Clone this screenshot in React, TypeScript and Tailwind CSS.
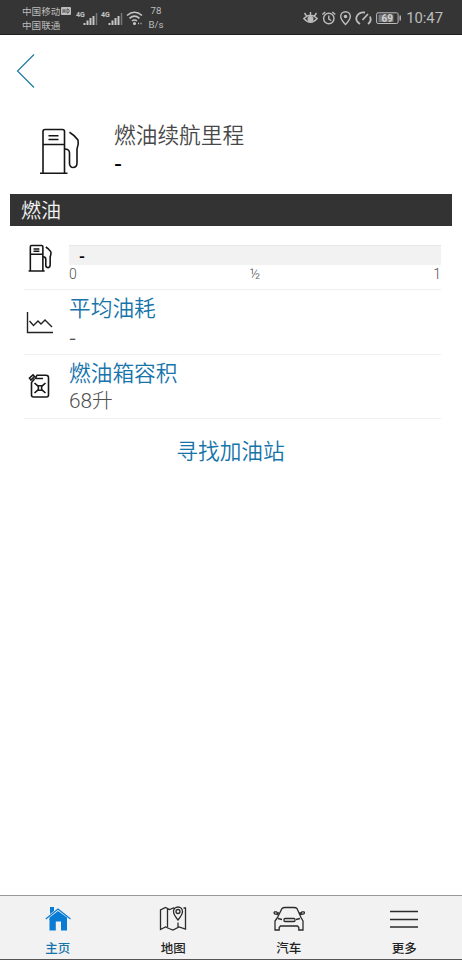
import React from 'react';

const light = "font-['Noto_Sans_CJK_SC',sans-serif] font-[350]";
const latin = "font-[Roboto,'Noto_Sans_CJK_SC',sans-serif] font-light";

function Pump({ className, sw }: { className: string; sw: number }) {
  return (
    <svg className={className} viewBox="0 0 42 48" fill="none" stroke="#151515" strokeWidth={sw}>
      <path d="M4 46V4.500Q4 2.500 6 2.500H23.500Q25.500 2.500 25.500 4.500V46M4 17.500H25.500M9.500 8.700H19.500M9.500 12.500H19.500M1 46.200H28.500" />
      <path d="M25.500 22Q30.500 22 30.500 26V37Q31 40.500 34.500 40.500Q38 40 38 36V22Q40 17 39 13Q36 8.500 30.500 5.200" />
    </svg>
  );
}

function Signal({ type }: { type: string }) {
  return (
    <svg className="h-4 w-[22px]" viewBox="0 0 22 16">
      <text x="0" y="6.500" fontSize="7" fontWeight="bold" fontFamily="Roboto, sans-serif" fill="#c6c6c6">{type}</text>
      <path d="M8.500 13v2M11.500 10.500v4.500M14.500 8v7M17.500 6v9" stroke="#c6c6c6" strokeWidth="2" />
      <path d="M20.500 3v12" stroke="#777" strokeWidth="1.500" />
    </svg>
  );
}

function StatusBar() {
  return (
    <header className="flex h-[35px] shrink-0 items-center border-b border-[#202020] bg-[#353535] pt-px text-[#bdbdbd]">
      <div className="ml-[22px] w-[54px] font-['Noto_Sans_CJK_SC',sans-serif] text-[9.6px] leading-[14px]">
        <div className="flex items-center whitespace-nowrap">中国移动
          <svg className="ml-px h-2 w-[10px] shrink-0" viewBox="0 0 10 8">
            <rect width="10" height="8" rx="1" fill="#bdbdbd" />
            <path d="M2 2v4M4 2v4M2 4h2M6 2v4h1l1-1V3L7 2Z" fill="none" stroke="#444" strokeWidth=".8" />
          </svg>
        </div>
        <div>中国联通</div>
      </div>
      <div className="flex items-center gap-[3px]">
        <Signal type="4G" />
        <Signal type="4G" />
      </div>
      <svg className="ml-[3px] h-4 w-[17px]" viewBox="0 0 17 16" fill="none" stroke="#c6c6c6" strokeWidth="1.600">
        <path d="M1 5.500Q8.500-1 16 5.500M3.500 8.300Q8.500 4 13.500 8.300M6 11Q8.500 9 11 11" />
        <circle cx="8.500" cy="13.500" r=".8" />
        <path d="M12 13.500h1M14.500 13.500h1" />
      </svg>
      <div className="ml-[4px] w-[18px] text-center font-[Roboto,sans-serif] text-[9.700px] leading-[14px]">
        <div>78</div><div>B/s</div>
      </div>
      <div className="ml-auto flex items-center">
        <svg className="h-4 w-[98px]" viewBox="0 0 98 16" fill="none" stroke="#bdbdbd" strokeWidth="1.400">
          <path d="M.8 8.500Q7.500 2 14.200 8.500Q7.500 16 .8 8.500ZM1.500 3L3.500 6M7.500 2v3M13.500 3L11.500 6" />
          <circle cx="7.500" cy="8.900" r="2.300" fill="#bdbdbd" />
          <circle cx="25.800" cy="8.500" r="5.200" />
          <path d="M19.300 4.500L22.300 2M29.300 2l3 2.500M25.800 5.500V9l2.500 1.500" />
          <path d="M42.500 14.500Q37.700 9.500 37.700 6.500A4.800 4.800 0 0 1 47.300 6.500Q47.300 9.500 42.500 14.500Z" />
          <circle cx="42.500" cy="6.500" r="1.100" fill="#bdbdbd" />
          <path d="M57 14Q52.300 11 53.500 7Q55.500 2 62 2.500M65 4L59.500 10M67 6.500Q69 11 65 14" strokeWidth="1.800" />
          <rect x="73.600" y="2.800" width="21.500" height="10.700" rx="1.500" strokeWidth="1" />
          <rect x="75.500" y="4.500" width="15" height="7.500" fill="#777" stroke="none" />
          <text x="84.200" y="12" textAnchor="middle" fontSize="10" fontWeight="bold" fontFamily="Roboto, sans-serif" fill="#d0d0d0" stroke="none">69</text>
          <path d="M97.200 5.500v5" />
        </svg>
        <span className="mr-[19px] ml-[5px] font-[Roboto,sans-serif] text-[14.800px] leading-[18px]">10:47</span>
      </div>
    </header>
  );
}

function InfoRow({ icon, title, value, valueFont }: { icon: React.ReactNode; title: string; value: string; valueFont: string }) {
  return (
    <div className="flex h-[64.500px] border-b border-[#efefef]">
      <div className="flex w-[45px] shrink-0">{icon}</div>
      <div>
        <div className={'pt-[3px] text-[21.700px] leading-[28px] text-[#1674ab] ' + light}>{title}</div>
        <div className={'text-[20.800px] leading-[30px] text-[#505050] ' + valueFont}>{value}</div>
      </div>
    </div>
  );
}

function Tab({ label, active, children }: { label: string; active?: boolean; children: React.ReactNode }) {
  return (
    <div className={"flex flex-1 flex-col items-center pt-[9px] font-['Noto_Sans_CJK_SC',sans-serif] text-[12.500px] leading-[18px] font-medium " + (active ? 'text-[#1674ab]' : 'text-[#222]')}>
      <svg className="mb-[6px] h-[28px] w-[34px]" viewBox="0 0 34 28" fill="none" stroke="#2b2b2b" strokeWidth="1.300">{children}</svg>
      {label}
    </div>
  );
}

export default function App() {
  return (
    <div className="flex h-[960px] w-[462px] flex-col overflow-hidden bg-white">
      <StatusBar />
      <main className="flex-1">
        <svg className="mt-[18px] ml-[16px] h-[36px] w-[20px]" viewBox="0 0 20 36" fill="none" stroke="#20799d" strokeWidth="1.200">
          <path d="M18 1.500L1.500 18L18 34.500" />
        </svg>
        <div className="flex h-[105px] pt-[31px] pl-[39px]">
          <Pump className="mt-[7px] h-[48px] w-[42px]" sw={1.6} />
          <div className={'ml-[33px] text-[21.700px] ' + light}>
            <div className="leading-[28px] text-[#484848]">燃油续航里程</div>
            <div className="mt-[5px] font-['Liberation_Sans',sans-serif] text-[24px] leading-[20px] font-normal text-black">-</div>
          </div>
        </div>
        <div className={'mx-[10px] flex h-[32px] w-[442px] items-center bg-[#333] pl-[11px] text-[20px] text-[#f4f4f4] ' + light}>燃油</div>
        <div className="mr-[21px] ml-[24px]">
          <div className="flex h-[64px] border-b border-[#efefef] pt-[18px]">
            <div className="w-[45px] shrink-0"><Pump className="ml-[3.500px] h-[28px] w-[24.500px]" sw={2.7} /></div>
            <div className="flex-1">
              <div className="mt-px flex h-[20px] items-center border-t border-[#e7e7e7] bg-[#f2f2f2] pb-[2px] pl-[10px] font-['Noto_Sans_CJK_SC',sans-serif] text-[16px] font-bold text-black">-</div>
              <div className={'flex justify-between text-[14px] leading-[18px] text-[#555] ' + latin}>
                <span>0</span><span>½</span><span>1</span>
              </div>
            </div>
          </div>
          <InfoRow title="平均油耗" value="-" valueFont={light} icon={
            <svg className="mt-[21px] ml-[2px] h-[23px] w-[28px]" viewBox="0 0 28 23" fill="none" stroke="#222" strokeWidth="1.400">
              <path d="M1.500 1v20.500H27M3.500 10l4 4.500L12 10l3 3 4-4 7 7" />
            </svg>
          } />
          <InfoRow title="燃油箱容积" value="68升" valueFont={latin} icon={
            <svg className="mt-[18px] ml-[4px] h-[26px] w-[22px]" viewBox="0 0 22 26" fill="none" stroke="#181818" strokeWidth="1.600">
              <path d="M7 6L9 2.200H18Q20.500 2.200 20.500 4.500V22Q20.500 24 18.500 24H5.500Q3.500 24 3.500 22V9.500L6.500 6M1.500 5L5 1.800L6.500 3.500L3 7ZM8 5.500H15" />
              <path d="M6.500 10l3 2.700h5l3-2.700M6.500 20l3-2.700h5l3 2.700M10 12.700q1 2.300 0 4.600M14 12.700q-1 2.300 0 4.600" />
            </svg>
          } />
          <div className={'-ml-[4px] pt-[16px] text-center text-[21.700px] leading-[29px] text-[#1674ab] ' + light}>寻找加油站</div>
        </div>
      </main>
      <nav className="flex h-[65px] shrink-0 border-t border-b border-t-[#999] border-b-[#555] bg-[#f2f2f2]">
        <Tab label="主页" active>
          <path d="M8.500 14L17 7L26 14V25.500H20V16.500H14.800V25.500H8.500Z" fill="#087bd5" stroke="none" />
          <path d="M4.800 14L17 4L29.500 14" stroke="#087bd5" strokeWidth="1.200" />
          <path d="M9 2H13V6L9 9Z" fill="#087bd5" stroke="none" />
          <path d="M8.500 12.500L17 6L26 12.500V15H8.500Z" fill="#087bd5" stroke="none" />
        </Tab>
        <Tab label="地图">
          <path d="M19 4L17.500 3L13.500 4.500L9.500 2.500L4.500 5V24.500L9.500 22L13 23.500L17 25L23 22L29.500 24V3L27.500 3M11.500 4V22M22 17.500V22.500" />
          <path d="M22 15Q17.500 9.500 17.500 6.500A4.500 4.500 0 0 1 26.500 6.500Q26.500 9.500 22 15Z" />
          <circle cx="22" cy="6.500" r="2" />
        </Tab>
        <Tab label="汽车">
          <path d="M5.500 12.500L10 3.500Q11 2.500 13 2.500H22Q24 2.500 25 3.500L29 12.500L31 16V25H26.800V22.500L25.500 21H8.500L7.200 22.500V25H3V16L5.500 12.500M7 8H5.500L4.500 6.800H2.500Q1.500 8 2.800 9L6 9.500M27.500 8H29L30 6.800H32Q33 8 31.700 9L28 9.500M6 13.500l4 1M28 13.500l-4 1" />
          <rect x="12" y="13.500" width="11" height="3" rx="1" />
        </Tab>
        <Tab label="更多">
          <path d="M3 6.500H31M3 14.500H31M3 22H31" strokeWidth="1.500" />
        </Tab>
      </nav>
    </div>
  );
}
